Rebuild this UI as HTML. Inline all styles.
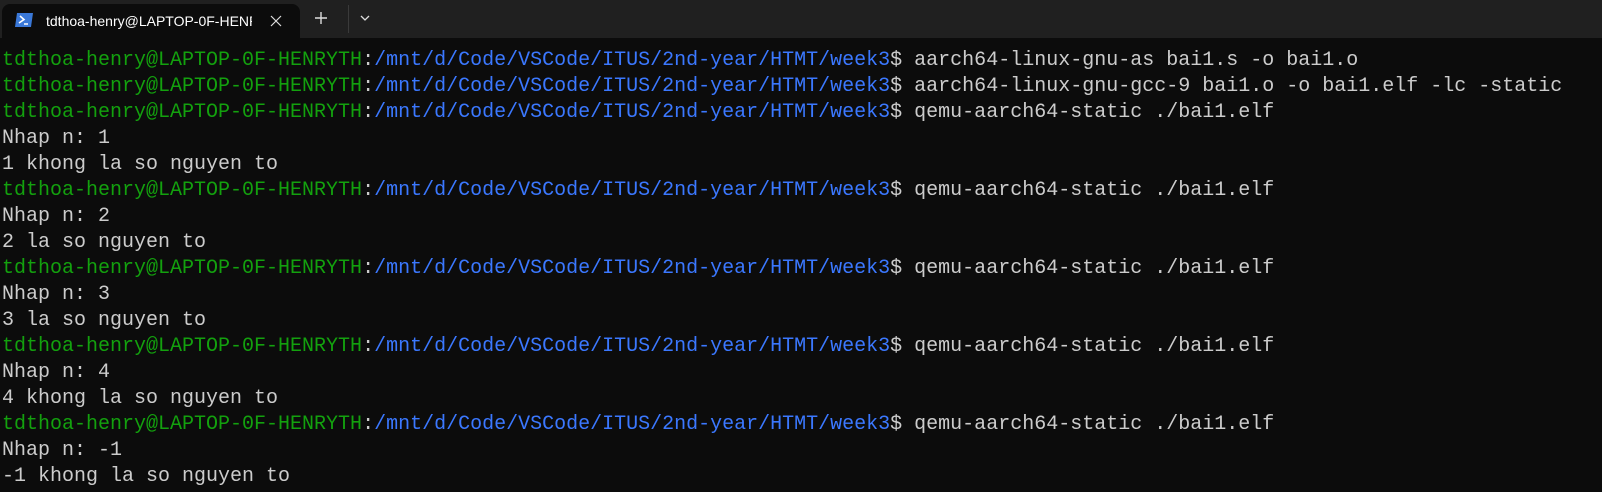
<!DOCTYPE html>
<html><head><style>
body{margin:0;width:1602px;height:492px;background:#0c0c0c;overflow:hidden;font-family:"Liberation Mono",monospace;}
.bar{position:absolute;left:0;top:0;width:1602px;height:38px;background:#202020;}
.tab{position:absolute;left:2px;top:4px;width:298px;height:34px;background:#0c0c0c;border-radius:8px 8px 0 0;}
.tt{position:absolute;left:44px;top:9px;font:14px "Liberation Sans",sans-serif;color:#fff;width:206px;overflow:hidden;white-space:nowrap;}
.term{position:absolute;left:2px;top:48px;font-size:20px;color:#cccccc;white-space:pre;line-height:26px;}
.g{color:#13a10e}.b{color:#3b78ff}
</style></head><body>
<div class="bar">
<div class="tab">
<svg style="position:absolute;left:12px;top:8px" width="20" height="16" viewBox="0 0 20 16"><path d="M3 1H19L17 15H1Z" fill="#3a78d8"/><path d="M6 4L10 7.5L5 11" stroke="#fff" stroke-width="1.6" fill="none"/><path d="M10 12H14" stroke="#fff" stroke-width="1.5"/></svg>
<div class="tt">tdthoa-henry@LAPTOP-0F-HENRYTH</div>
<svg style="position:absolute;left:268px;top:11px" width="12" height="12"><path d="M1 1L11 11M11 1L1 11" stroke="#ddd" stroke-width="1.2"/></svg>
</div>
<svg style="position:absolute;left:314px;top:11px" width="14" height="14"><path d="M7 1V13M1 7H13" stroke="#ddd" stroke-width="1.4"/></svg>
<div style="position:absolute;left:348px;top:5px;width:1px;height:28px;background:#3a3a3a"></div>
<svg style="position:absolute;left:360px;top:15px" width="10" height="7"><path d="M1 1L5 5L9 1" stroke="#ddd" stroke-width="1.3" fill="none"/></svg>
</div>
<div class="term"><span class="g">tdthoa-henry@LAPTOP-0F-HENRYTH</span>:<span class="b">/mnt/d/Code/VSCode/ITUS/2nd-year/HTMT/week3</span>$ aarch64-linux-gnu-as bai1.s -o bai1.o
<span class="g">tdthoa-henry@LAPTOP-0F-HENRYTH</span>:<span class="b">/mnt/d/Code/VSCode/ITUS/2nd-year/HTMT/week3</span>$ aarch64-linux-gnu-gcc-9 bai1.o -o bai1.elf -lc -static
<span class="g">tdthoa-henry@LAPTOP-0F-HENRYTH</span>:<span class="b">/mnt/d/Code/VSCode/ITUS/2nd-year/HTMT/week3</span>$ qemu-aarch64-static ./bai1.elf
Nhap n: 1
1 khong la so nguyen to
<span class="g">tdthoa-henry@LAPTOP-0F-HENRYTH</span>:<span class="b">/mnt/d/Code/VSCode/ITUS/2nd-year/HTMT/week3</span>$ qemu-aarch64-static ./bai1.elf
Nhap n: 2
2 la so nguyen to
<span class="g">tdthoa-henry@LAPTOP-0F-HENRYTH</span>:<span class="b">/mnt/d/Code/VSCode/ITUS/2nd-year/HTMT/week3</span>$ qemu-aarch64-static ./bai1.elf
Nhap n: 3
3 la so nguyen to
<span class="g">tdthoa-henry@LAPTOP-0F-HENRYTH</span>:<span class="b">/mnt/d/Code/VSCode/ITUS/2nd-year/HTMT/week3</span>$ qemu-aarch64-static ./bai1.elf
Nhap n: 4
4 khong la so nguyen to
<span class="g">tdthoa-henry@LAPTOP-0F-HENRYTH</span>:<span class="b">/mnt/d/Code/VSCode/ITUS/2nd-year/HTMT/week3</span>$ qemu-aarch64-static ./bai1.elf
Nhap n: -1
-1 khong la so nguyen to</div>
</body></html>
